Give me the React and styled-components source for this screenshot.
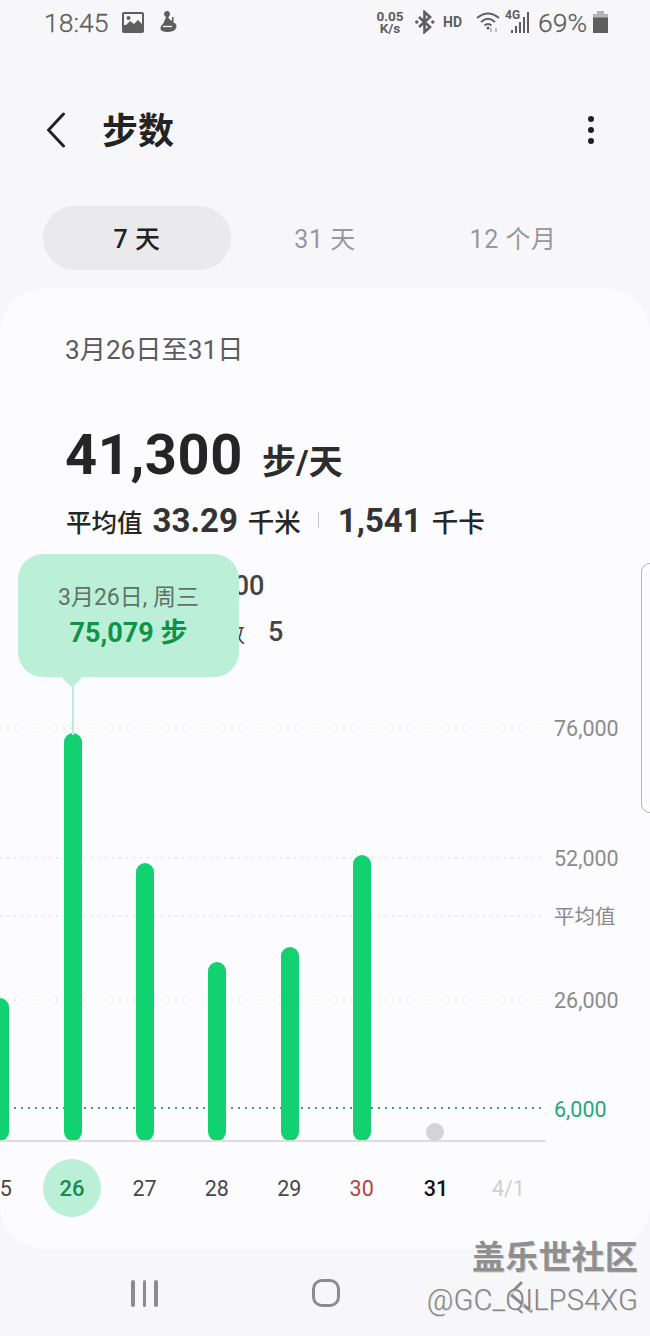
import React from "react";
import styled, { createGlobalStyle } from "styled-components";

const Global = createGlobalStyle`
  html, body { margin: 0; padding: 0; background: #f7f7fa; }
  * { box-sizing: border-box; }
`;

const FONT = `Roboto, "Noto Sans CJK SC", sans-serif`;

const Page = styled.div`
  position: relative;
  width: 650px;
  height: 1336px;
  overflow: hidden;
  background: #f7f7fa;
  font-family: ${FONT};
  color: #252525;
`;

const StatusBar = styled.div`
  height: 44px;
  padding: 0 42px 0 44px;
  display: flex;
  align-items: center;
  justify-content: space-between;
  color: #5e5e5e;
`;
const StatusGroup = styled.div`
  display: flex;
  align-items: center;
`;
const Clock = styled.span`
  font-size: 26.5px;
  font-weight: 300;
  margin-right: 14px;
  -webkit-text-stroke: 0.3px #5e5e5e;
`;
const Speed = styled.div`
  width: 30px;
  margin-right: 10px;
  font-size: 13.5px;
  font-weight: 700;
  line-height: 12.5px;
  text-align: center;
`;
const Tiny = styled.span`
  font-size: 14px;
  font-weight: 700;
  margin-right: ${(p) => p.$mr || 0}px;
`;
const Percent = styled.span`
  font-size: 26.5px;
  font-weight: 300;
  margin: 0 6px 0 7px;
  -webkit-text-stroke: 0.3px #5e5e5e;
`;

const Header = styled.header`
  height: 84px;
  margin-top: 44px;
  padding: 0 47px;
  display: flex;
  align-items: center;
`;
const Title = styled.h1`
  margin: 0 0 0 37px;
  padding-bottom: 4px;
  font-size: 36px;
  font-weight: 700;
  color: #232323;
  flex: 1;
`;
const Kebab = styled.div`
  width: 6px;
  margin-right: 9px;
  display: flex;
  flex-direction: column;
  gap: 5px;
`;
const Dot = styled.i`
  width: 6px;
  height: 6px;
  border-radius: 50%;
  background: #1f1f1f;
`;

const Tabs = styled.nav`
  margin: 34px 43px 0;
  display: grid;
  grid-template-columns: repeat(3, 188px);
`;
const Tab = styled.div`
  height: 64px;
  padding-bottom: 3px;
  border-radius: 32px;
  display: flex;
  align-items: center;
  justify-content: center;
  font-size: 25px;
  font-weight: ${(p) => (p.$active ? 500 : 400)};
  letter-spacing: 0.5px;
  color: ${(p) => (p.$active ? "#222" : "#98989c")};
  background: ${(p) => (p.$active ? "#eaeaed" : "transparent")};
`;

const Card = styled.main`
  position: relative;
  margin-top: 19px;
  height: 960px;
  padding-top: 44px;
  border-radius: 44px;
  background: #fcfcfe;
  overflow: hidden;
`;
const DateRange = styled.div`
  margin-left: 65px;
  font-size: 26.2px;
  line-height: 34px;
  color: #5b5b5e;
`;
const BigRow = styled.div`
  margin: 56px 0 0 65px;
  display: flex;
  align-items: baseline;
  height: 64px;
  line-height: 64px;
`;
const BigNum = styled.span`
  font-size: 56px;
  font-weight: 700;
  letter-spacing: 0.6px;
`;
const BigUnit = styled.span`
  margin-left: 19px;
  font-size: 34px;
  font-weight: 700;
  color: #2c2c2c;
`;
const AvgRow = styled.div`
  margin: 13px 0 0 66px;
  height: 40px;
  display: flex;
  align-items: center;
`;
const AvgLabel = styled.span`
  font-size: 25.5px;
  font-weight: 500;
  margin-right: 10px;
`;
const AvgValue = styled.span`
  font-size: 33px;
  font-weight: 700;
  color: #333;
  margin-right: 10px;
`;
const AvgUnit = styled.span`
  font-size: 26.5px;
  font-weight: 500;
`;
const Divider = styled.i`
  width: 1px;
  height: 16px;
  margin: 0 19px 0 17px;
  background: #c9c9cc;
`;
const GoalRow = styled.div`
  margin: ${(p) => p.$mt}px 0 0 65px;
  height: 36px;
  display: flex;
  align-items: center;
  color: #444448;
`;
const GoalLabel = styled.span`
  font-size: ${(p) => p.$size}px;
  margin-right: ${(p) => p.$mr}px;
`;
const GoalValue = styled.span`
  font-size: 27px;
  font-weight: 500;
`;

const Tooltip = styled.div`
  position: absolute;
  left: 18px;
  top: 265px;
  width: 221px;
  height: 123px;
  border-radius: 25px;
  background: #bbefd7;
  display: flex;
  flex-direction: column;
  align-items: center;
  padding-top: 27px;
  &::after {
    content: "";
    position: absolute;
    left: 47px;
    bottom: -8px;
    width: 14px;
    height: 14px;
    background: #bbefd7;
    transform: rotate(45deg);
    border-radius: 0 0 3px 0;
  }
`;
const TipDate = styled.div`
  font-size: 23px;
  line-height: 34px;
  color: #5d7369;
`;
const TipValue = styled.div`
  font-size: 27px;
  line-height: 37px;
  font-weight: 700;
  color: #0f9347;
`;
const TipStem = styled.i`
  position: absolute;
  left: 72px;
  top: 396px;
  width: 1.5px;
  height: 50px;
  background: #c3e9d8;
`;

const Chart = styled.section`
  position: relative;
  margin-top: 50px;
  height: 441px;
`;
const GridLine = styled.i`
  position: absolute;
  left: 0;
  width: 546px;
  top: ${(p) => p.$y - 700}px;
  height: 2px;
  background: repeating-linear-gradient(
    to right,
    ${(p) => p.$color} 0 2px,
    transparent 2px 7px
  );
`;
const YLabel = styled.span`
  position: absolute;
  left: 554px;
  top: ${(p) => p.$y - 700 - 15}px;
  line-height: 30px;
  font-size: ${(p) => p.$size || 21.5}px;
  color: ${(p) => p.$color || "#8b8b8e"};
`;
const Bars = styled.div`
  position: absolute;
  left: -36px;
  bottom: 0;
  display: flex;
  align-items: flex-end;
`;
const BarCell = styled.div`
  width: 72.4px;
  display: flex;
  justify-content: center;
`;
const Bar = styled.div`
  width: 18px;
  border-radius: 9px;
  background: ${(p) => p.$color};
`;
const Axis = styled.i`
  position: absolute;
  left: 0;
  bottom: -1px;
  width: 546px;
  height: 2px;
  background: #dcdcdc;
`;
const Days = styled.div`
  margin: 18px 0 0 -36.5px;
  display: flex;
  height: 58px;
`;
const Day = styled.div`
  width: 72.4px;
  flex: none;
  padding-left: ${(p) => p.$nudge || 0}px;
  display: flex;
  align-items: center;
  justify-content: center;
  font-size: 21.5px;
  font-weight: ${(p) => (p.$strong ? 500 : 400)};
  color: ${(p) => p.$color || "#47474a"};
`;
const DayBadge = styled.div`
  width: 58px;
  height: 58px;
  border-radius: 50%;
  background: #bbefd7;
  display: flex;
  align-items: center;
  justify-content: center;
  color: #1a8a4d;
  font-weight: 500;
  font-size: 22px;
`;

const EdgeHandle = styled.div`
  position: absolute;
  left: 641px;
  top: 563px;
  width: 20px;
  height: 250px;
  border: 1.5px solid #b4b4b4;
  border-radius: 9px;
`;

const NavBar = styled.footer`
  position: absolute;
  left: 0;
  right: 0;
  top: 1276px;
  height: 34px;
  display: grid;
  grid-template-columns: 144.5px 181.5px 182px;
  grid-template-rows: 34px;
  align-items: center;
`;
const NavLines = styled.div`
  justify-self: end;
  margin-right: -13px;
  display: flex;
  gap: 8px;
`;
const NavLine = styled.i`
  width: 3.5px;
  height: 27px;
  border-radius: 2px;
  background: #8c8c8c;
`;
const NavHome = styled.div`
  justify-self: end;
  margin-right: -14px;
  width: 28px;
  height: 28px;
  border: 3.5px solid #8c8c8c;
  border-radius: 10px;
`;
const NavBack = styled.svg`
  justify-self: end;
  align-self: start;
  margin: 4px -25px 0 0;
`;

const Watermark = styled.div`
  position: absolute;
  right: 12px;
  top: 1237px;
  display: flex;
  flex-direction: column;
  align-items: flex-end;
  color: #8f8f8f;
`;
const WmCn = styled.div`
  font-size: 33px;
  line-height: 42px;
  font-weight: 700;
  letter-spacing: 0.2px;
  text-shadow: 1px 1px 0 #cfcfcf;
`;
const WmId = styled.div`
  margin-top: 1px;
  font-size: 29px;
  line-height: 40px;
  letter-spacing: 0.2px;
  font-weight: 300;
  color: #858585;
  text-shadow: 1px 1px 0 #dedede;
`;

const ImageIcon = () => (
  <svg width="22" height="21" viewBox="0 0 22 21" style={{ marginRight: 14 }}>
    <rect width="22" height="21" rx="2" fill="#5e5e5e" />
    <rect x="2" y="2" width="18" height="11" fill="#f7f7fa" />
    <circle cx="6.5" cy="6" r="2" fill="#5e5e5e" />
    <path d="M2 15 L8 9 L12 12 L16 8 L20 12 V19 H2Z" fill="#5e5e5e" />
  </svg>
);
const FigureIcon = () => (
  <svg width="19" height="22" viewBox="0 0 19 22">
    <path
      d="M9 0c2 0 3 1.500 3 3.200c0 1.500-1 2.300-1.800 3c.5 1.500 2 2 2.800 3.600l1-.8V6h1.500v5.500c1.500.5 3 1.800 3 3.800c0 3.500-3.500 5.700-8.500 5.700c-4 0-7.500-.8-7.500-3.500c0-3 2.500-4 3.500-6.500c.5-1.800 1.200-3.500 2.200-4.500C7 5 6 4.200 6 3.200C6 1.500 7.500 0 9 0z"
      fill="#5e5e5e"
    />
    <path d="M5 15.500h9" stroke="#f7f7fa" strokeWidth="1.300" />
  </svg>
);
const BluetoothIcon = () => (
  <svg width="20" height="24" viewBox="0 0 20 24" style={{ marginRight: 8 }}>
    <path
      d="M4 7 L15 17 L9.500 22 V2 L15 7 L4 17"
      fill="none"
      stroke="#5e5e5e"
      strokeWidth="2.600"
    />
    <circle cx="1.800" cy="12" r="1.700" fill="#5e5e5e" />
    <circle cx="17.800" cy="12" r="1.700" fill="#5e5e5e" />
  </svg>
);
const WifiIcon = () => (
  <svg width="24" height="22" viewBox="0 0 24 22">
    <g fill="none" stroke="#5e5e5e" strokeWidth="2">
      <path d="M1 7 Q12 -2 23 7" />
      <path d="M5 11 Q12 4.500 19 11" />
      <path d="M8.500 14.500 Q12 11.500 15.500 14.500" />
    </g>
    <circle cx="12" cy="17" r="1.500" fill="#5e5e5e" />
    <path d="M15 17v4M20 21v-4" stroke="#aaa" strokeWidth="1.500" />
  </svg>
);
const SignalIcon = () => (
  <svg width="26" height="26" viewBox="0 0 26 26" style={{ marginLeft: 5 }}>
    <text x="0" y="10" fontSize="12" fontWeight="700" fontFamily="Roboto" fill="#5e5e5e">
      4G
    </text>
    <g fill="#5e5e5e">
      <rect x="6" y="21" width="2" height="3" />
      <rect x="10" y="17" width="2" height="7" />
      <rect x="14" y="13" width="2" height="11" />
      <rect x="18" y="8" width="2" height="16" />
      <rect x="22" y="3" width="2" height="21" />
    </g>
  </svg>
);
const BatteryIcon = () => (
  <svg width="15" height="22" viewBox="0 0 15 22">
    <path d="M4 0h7v3h4v6H0V3h4z" fill="#b5b5b5" />
    <rect y="6.500" width="15" height="15.500" fill="#5e5e5e" />
  </svg>
);
const BackIcon = () => (
  <svg width="18" height="36" viewBox="0 0 18 36">
    <path d="M16.500 2 L1.500 18 L16.500 34" fill="none" stroke="#222" strokeWidth="3" strokeLinecap="round" />
  </svg>
);

const BARS = [
  { key: 25, h: 143 },
  { key: 26, h: 408 },
  { key: 27, h: 278 },
  { key: 28, h: 179 },
  { key: 29, h: 194 },
  { key: 30, h: 286 },
  { key: 31, h: 18, muted: true },
];
const GRID = [
  { y: 727, label: "76,000" },
  { y: 857, label: "52,000" },
  { y: 915, label: "平均值", size: 20.5 },
  { y: 999, label: "26,000" },
];

export default function App() {
  return (
    <Page>
      <Global />
      <StatusBar>
        <StatusGroup>
          <Clock>18:45</Clock>
          <ImageIcon />
          <FigureIcon />
        </StatusGroup>
        <StatusGroup>
          <Speed>
            0.05
            <br />
            K/s
          </Speed>
          <BluetoothIcon />
          <Tiny $mr={14}>HD</Tiny>
          <WifiIcon />
          <SignalIcon />
          <Percent>69%</Percent>
          <BatteryIcon />
        </StatusGroup>
      </StatusBar>

      <Header>
        <BackIcon />
        <Title>步数</Title>
        <Kebab>
          <Dot />
          <Dot />
          <Dot />
        </Kebab>
      </Header>

      <Tabs>
        <Tab $active>7 天</Tab>
        <Tab>31 天</Tab>
        <Tab>12 个月</Tab>
      </Tabs>

      <Card>
        <DateRange>3月26日至31日</DateRange>
        <BigRow>
          <BigNum>41,300</BigNum>
          <BigUnit>步/天</BigUnit>
        </BigRow>
        <AvgRow>
          <AvgLabel>平均值</AvgLabel>
          <AvgValue>33.29</AvgValue>
          <AvgUnit>千米</AvgUnit>
          <Divider />
          <AvgValue>1,541</AvgValue>
          <AvgUnit>千卡</AvgUnit>
        </AvgRow>
        <GoalRow $mt={28}>
          <GoalLabel $size={24} $mr={36}>目标步数</GoalLabel>
          <GoalValue>6,000</GoalValue>
        </GoalRow>
        <GoalRow $mt={10}>
          <GoalLabel $size={22.5} $mr={23}>达到每日目标次数</GoalLabel>
          <GoalValue>5</GoalValue>
        </GoalRow>

        <Chart>
          {GRID.map((g) => (
            <React.Fragment key={g.label}>
              <GridLine $y={g.y} $color="#ebebef" />
              <YLabel $y={g.y + 2} $size={g.size}>{g.label}</YLabel>
            </React.Fragment>
          ))}
          <GridLine $y={1107} $color="#3f9f80" />
          <YLabel $y={1110} $color="#24a87a">
            6,000
          </YLabel>
          <Bars>
            {BARS.map((b) => (
              <BarCell key={b.key}>
                <Bar $color={b.muted ? "#d4d4d6" : "#11d170"} style={{ height: b.h }} />
              </BarCell>
            ))}
          </Bars>
          <Axis />
        </Chart>

        <Days>
          <Day>25</Day>
          <Day>
            <DayBadge>26</DayBadge>
          </Day>
          <Day>27</Day>
          <Day>28</Day>
          <Day>29</Day>
          <Day $color="#b4443f">30</Day>
          <Day $strong $color="#111" $nudge={4}>
            31
          </Day>
          <Day $color="#cfcfd2" $nudge={4}>4/1</Day>
        </Days>

        <TipStem />
        <Tooltip>
          <TipDate>3月26日, 周三</TipDate>
          <TipValue>75,079 步</TipValue>
        </Tooltip>
      </Card>

      <EdgeHandle />

      <NavBar>
        <NavLines>
          <NavLine />
          <NavLine />
          <NavLine />
        </NavLines>
        <NavHome />
        <NavBack width="26" height="34" viewBox="0 0 26 34">
          <path d="M15 2 L3 14 L25 32" fill="none" stroke="#8c8c8c" strokeWidth="3" />
        </NavBack>
      </NavBar>

      <Watermark>
        <WmCn>盖乐世社区</WmCn>
        <WmId>@GC_QILPS4XG</WmId>
      </Watermark>
    </Page>
  );
}
